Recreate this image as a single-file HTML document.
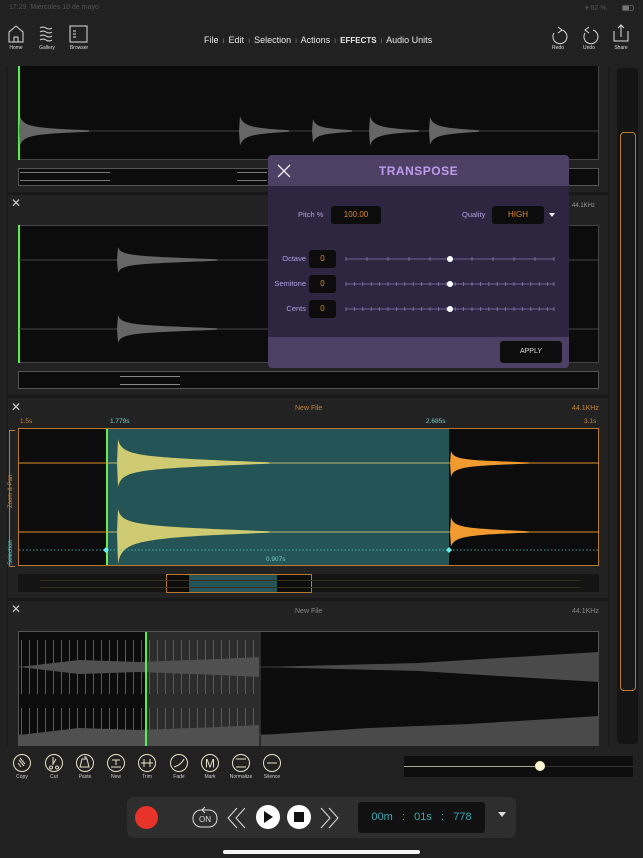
<!DOCTYPE html>
<html><head><meta charset="utf-8">
<style>
*{box-sizing:border-box;margin:0;padding:0}
body{width:643px;height:858px;background:#212121;position:relative;overflow:hidden;font-family:"Liberation Sans",sans-serif;color:#ddd}
.a{position:absolute}
.t{font-size:5px;color:#ddd;text-align:center}
.menu{font-size:9px;color:#e8e8e8}
.wf{background:#0c0c0c}
.lbl{font-size:7.5px;color:#b0a0e0}
.num{background:#0c0c0c;border-radius:3px;color:#e08a2a;font-size:8px;text-align:center}
</style></head><body>
<div class="a" style="left:9px;top:4px;font-size:7px;color:#555">17:29&nbsp; Miércoles 10 de mayo</div>
<div class="a" style="left:585px;top:4px;font-size:7px;color:#555">▾ 62 %</div>
<div class="a" style="left:622px;top:5px;width:12px;height:6px;border:1px solid #555;border-radius:2px"><div style="width:6px;height:4px;background:#777"></div></div>
<svg class="a" style="left:0;top:22px" width="643" height="36" viewBox="0 0 643 36" fill="none" stroke="#ddd" stroke-width="1">
<path d="M9 20V10l7-6 7 6v10zM14 20v-5h4v5"/>
<path d="M40 6q3-2 6 0t6 0M40 10q3-2 6 0t6 0M40 14q3-2 6 0t6 0M40 18q3-2 6 0t6 0"/>
<rect x="70" y="4" width="17" height="16"/><path d="M73 9h3M73 12h3M73 15h3"/>
<path d="M562 8a7 7 0 1 1-8 3M558 5l4 3-4 3"/>
<path d="M585 11a7 7 0 1 0 8-3M589 5l-4 3 4 3"/>
<path d="M614 9v10h14V9M621 15V3M618 6l3-3 3 3"/>
</svg>
<div class="a t" style="left:4px;top:45px;width:24px">Home</div>
<div class="a t" style="left:34px;top:45px;width:26px">Gallery</div>
<div class="a t" style="left:64px;top:45px;width:30px">Browser</div>
<div class="a t" style="left:548px;top:45px;width:20px">Redo</div>
<div class="a t" style="left:579px;top:45px;width:20px">Undo</div>
<div class="a t" style="left:610px;top:45px;width:22px">Share</div>
<div class="a menu" style="left:204px;top:35px;white-space:nowrap">File <span style="color:#888;font-size:6px">&nbsp;I&nbsp;</span> Edit <span style="color:#888;font-size:6px">&nbsp;I&nbsp;</span> Selection <span style="color:#888;font-size:6px">&nbsp;I&nbsp;</span> Actions <span style="color:#888;font-size:6px">&nbsp;I&nbsp;</span> <b style="font-size:8px">EFFECTS</b> <span style="color:#888;font-size:6px">&nbsp;I&nbsp;</span> Audio Units</div>

<div class="a" style="left:7px;top:66px;width:602px;height:680px;background:#191919"></div>
<div class="a" style="left:617px;top:68px;width:21px;height:676px;background:#141414;border-radius:4px"></div>
<div class="a" style="left:620px;top:132px;width:16px;height:559px;border:1px solid #b87a30;border-radius:4px;background:#181818"></div>

<!-- panel 1 -->
<div class="a" style="left:8px;top:66px;width:600px;height:126px;background:#222"></div>
<div class="a wf" style="left:18px;top:66px;width:581px;height:94px;border:1px solid #444;border-top:none"></div>
<div class="a" style="left:18px;top:66px;width:2px;height:94px;background:#5e5"></div>
<svg class="a" style="left:19px;top:66px" width="580" height="94" fill="#666">
<path d="M0 65h580" stroke="#555" stroke-width=".7"/>
<path d="M0 65L1 50C4 61 15 62 70 64.3L70 65.7C15 68 4 69 1 80Z"/>
<path d="M220 65L221 50C224 61 235 62 270 64.3L270 65.7C235 68 224 69 221 80Z"/>
<path d="M293 65L294 53C297 62 305 62 333 64.3L333 65.7C305 68 297 68 294 77Z"/>
<path d="M350 65L351 50C354 61 365 62 400 64.3L400 65.7C365 68 354 69 351 80Z"/>
<path d="M410 65L411 51C414 61 425 62 460 64.3L460 65.7C425 68 414 69 411 79Z"/>
</svg>
<div class="a wf" style="left:18px;top:168px;width:581px;height:18px;border:1px solid #555"></div>
<div class="a" style="left:20px;top:172px;width:90px;height:1px;background:#777"></div>
<div class="a" style="left:20px;top:180px;width:90px;height:1px;background:#777"></div>
<div class="a" style="left:237px;top:172px;width:30px;height:1px;background:#777"></div>
<div class="a" style="left:237px;top:180px;width:30px;height:1px;background:#777"></div>

<!-- panel 2 -->
<div class="a" style="left:8px;top:195px;width:600px;height:200px;background:#222"></div>
<div class="a" style="left:11px;top:196px;font-size:12px;color:#ccc">✕</div>
<div class="a" style="left:572px;top:203px;font-size:6px;color:#999">44.1KHz</div>
<div class="a wf" style="left:18px;top:225px;width:581px;height:138px;border:1px solid #444"></div>
<div class="a" style="left:18px;top:225px;width:2px;height:138px;background:#5e5"></div>
<svg class="a" style="left:19px;top:225px" width="580" height="138" fill="#666">
<path d="M0 35h580M0 104h580" stroke="#555" stroke-width=".7"/>
<path d="M98 35L99 22C102 31 115 31 198 34.3L198 35.7C115 39 102 39 99 48Z"/>
<path d="M98 104L99 90C102 100 115 100 198 103.3L198 104.7C115 108 102 108 99 118Z"/>
</svg>
<div class="a wf" style="left:18px;top:371px;width:581px;height:18px;border:1px solid #555"></div>
<div class="a" style="left:120px;top:376px;width:60px;height:1px;background:#888"></div>
<div class="a" style="left:120px;top:384px;width:60px;height:1px;background:#888"></div>

<!-- panel 3 -->
<div class="a" style="left:8px;top:398px;width:600px;height:200px;background:#222"></div>
<div class="a" style="left:11px;top:400px;font-size:12px;color:#ccc">✕</div>
<div class="a" style="left:295px;top:405px;font-size:7px;color:#c8843a">New File</div>
<div class="a" style="left:572px;top:405px;font-size:7px;color:#c8843a">44.1KHz</div>
<div class="a" style="left:20px;top:418px;font-size:6.5px;color:#c8843a">1.5s</div>
<div class="a" style="left:110px;top:418px;font-size:6.5px;color:#7cc">1.779s</div>
<div class="a" style="left:426px;top:418px;font-size:6.5px;color:#7cc">2.685s</div>
<div class="a" style="left:584px;top:418px;font-size:6.5px;color:#c8843a">3.1s</div>
<div class="a" style="left:9px;top:430px;width:6px;height:137px;border:1px solid #b87a30;border-right:none"></div>
<div class="a" style="left:8px;font-size:6px;color:#c8843a;transform:rotate(-90deg);transform-origin:0 0;white-space:nowrap;top:508px">Zoom &amp; Pan</div>
<div class="a" style="left:8px;top:565px;font-size:6px;color:#5cc;transform:rotate(-90deg);transform-origin:0 0;white-space:nowrap">Selection</div>
<div class="a wf" style="left:18px;top:428px;width:581px;height:138px;border:1px solid #b87a30"></div>
<div class="a" style="left:106px;top:429px;width:343px;height:136px;background:#245456;border-left:2px solid #6e4"></div>
<svg class="a" style="left:19px;top:429px" width="580" height="136">
<path d="M0 34h580M0 103h580" stroke="#e0902a" stroke-width="1"/>
<path d="M88 34h342M88 103h342" stroke="#b8b870" stroke-width="1"/>
<g fill="#cfcb72">
<path d="M98 34L99 10C103 27 115 28 250 33.3L250 34.7C115 40 103 41 99 58Z"/>
<path d="M98 103L99 80C103 96 115 97 250 102.3L250 103.7C115 109 103 112 99 135Z"/>
</g>
<g fill="#f09a30">
<path d="M431 34L432 22C435 31 445 31 510 33.4L510 34.6C445 37 435 38 432 48Z"/>
<path d="M431 103L432 88C435 99 445 99 510 102.4L510 103.6C445 106 435 108 432 118Z"/>
</g>
<path d="M0 121h580" stroke="#5cc" stroke-width=".8" stroke-dasharray="1.5 2"/>
<path d="M84 121l3-3 3 3-3 3zM427 121l3-3 3 3-3 3z" fill="#6ee"/>
</svg>
<div class="a" style="left:266px;top:556px;font-size:6.5px;color:#7cc">0.907s</div>
<div class="a" style="left:18px;top:574px;width:581px;height:18px;background:#141414"></div>
<div class="a" style="left:166px;top:574px;width:146px;height:19px;border:1px solid #b87a30;background:#0c0c0c"></div>
<div class="a" style="left:189px;top:575px;width:88px;height:17px;background:#245456"></div>
<div class="a" style="left:40px;top:580px;width:540px;height:1px;background:#3a2e1a"></div>
<div class="a" style="left:40px;top:587px;width:540px;height:1px;background:#3a2e1a"></div>

<!-- panel 4 -->
<div class="a" style="left:8px;top:601px;width:600px;height:145px;background:#222"></div>
<div class="a" style="left:11px;top:602px;font-size:12px;color:#ccc">✕</div>
<div class="a" style="left:295px;top:608px;font-size:7px;color:#888">New File</div>
<div class="a" style="left:572px;top:608px;font-size:7px;color:#888">44.1KHz</div>
<div class="a wf" style="left:18px;top:631px;width:581px;height:115px;border:1px solid #555;border-bottom:none"></div>
<div class="a" style="left:147px;top:632px;width:114px;height:114px;background:#2c2c2c"></div>
<svg class="a" style="left:19px;top:632px" width="580" height="114">
<defs>
<pattern id="sp" width="8" height="114" patternUnits="userSpaceOnUse"><rect x="2" y="8" width="1" height="54" fill="#5a5a5a"/><rect x="2" y="76" width="1" height="38" fill="#5a5a5a"/></pattern>
</defs>
<path d="M0 35h580M0 103h580" stroke="#444" stroke-width=".7"/>
<rect x="0" y="0" width="242" height="114" fill="url(#sp)"/>
<path d="M0 35L60 28L120 30L200 27L240 25V45L200 43L120 40L60 42L0 35Z" fill="#505050"/>
<path d="M0 103L60 96L120 98L200 95L240 93V114H0Z" fill="#505050"/>
<path d="M242 35L400 31L480 26L580 20V50L480 44L400 39L242 35Z" fill="#4a4a4a"/>
<path d="M242 103L350 96L450 92L580 84V114H242V103Z" fill="#4a4a4a"/>
</svg>
<div class="a" style="left:145px;top:632px;width:2px;height:114px;background:#5e5"></div>

<!-- tools -->
<svg class="a" style="left:0;top:752px" width="300" height="24" fill="none" stroke="#e8e4c8" stroke-width="1">
<circle cx="22" cy="11" r="8.5"/><circle cx="54" cy="11" r="8.5"/><circle cx="85" cy="11" r="8.5"/><circle cx="116" cy="11" r="8.5"/><circle cx="147" cy="11" r="8.5"/><circle cx="179" cy="11" r="8.5"/><circle cx="210" cy="11" r="8.5"/><circle cx="241" cy="11" r="8.5"/><circle cx="272" cy="11" r="8.5"/>
<path d="M19 8l5 6M20 6l5 6M18 11l3 4"/>
<path d="M53 5v8M56 7l-3 5M51 14a1.5 1.5 0 1 0 .1 0M57 14a1.5 1.5 0 1 0 .1 0"/>
<path d="M82 7h5l2 8h-9zM84 5h2v2"/>
<path d="M112 8h8M116 8v5M111 15h10"/>
<path d="M144 7v8M150 7v8M141 11h12"/>
<path d="M174 15q7-2 10-8"/>
<text x="210" y="15.5" text-anchor="middle" font-size="12" fill="#e8e4c8" stroke="none" font-family="Liberation Sans">M</text>
<path d="M236 7h10M236 15h10"/>
<path d="M267 11h10"/>
</svg>
<div class="a" style="left:0;top:774px;width:300px;height:8px;font-size:5px;color:#ccc">
<span class="a" style="left:14px;width:16px;text-align:center">Copy</span>
<span class="a" style="left:46px;width:16px;text-align:center">Cut</span>
<span class="a" style="left:77px;width:16px;text-align:center">Paste</span>
<span class="a" style="left:108px;width:16px;text-align:center">New</span>
<span class="a" style="left:139px;width:16px;text-align:center">Trim</span>
<span class="a" style="left:171px;width:16px;text-align:center">Fade</span>
<span class="a" style="left:202px;width:16px;text-align:center">Mark</span>
<span class="a" style="left:226px;width:30px;text-align:center">Normalize</span>
<span class="a" style="left:262px;width:20px;text-align:center">Silence</span></div>
<div class="a" style="left:404px;top:756px;width:229px;height:21px;background:#0e0e0e"></div>
<div class="a" style="left:404px;top:766px;width:136px;height:1px;background:#a8a890"></div>
<div class="a" style="left:540px;top:766px;width:93px;height:1px;background:#333"></div>
<div class="a" style="left:535px;top:761px;width:10px;height:10px;border-radius:50%;background:#fdf6d0"></div>
<div class="a" style="left:127px;top:797px;width:389px;height:41px;background:#2e2e2e;border-radius:7px"></div>
<div class="a" style="left:135px;top:806px;width:23px;height:23px;border-radius:50%;background:#e8332a"></div>
<svg class="a" style="left:190px;top:802px" width="160" height="32" fill="none" stroke="#ddd" stroke-width="1">
<rect x="3" y="8" width="24" height="17" rx="8"/><path d="M12 8l3-3M12 8l3 3"/>
<text x="15" y="20" text-anchor="middle" font-size="8" fill="#ddd" stroke="none" font-family="Liberation Sans">ON</text>
<path d="M47 6l-9 10 9 10M55 6l-9 10 9 10"/>
<circle cx="78" cy="15" r="12" fill="#fff" stroke="none"/><path d="M74 9v12l9-6z" fill="#111" stroke="none"/>
<circle cx="109" cy="15" r="12" fill="#fff" stroke="none"/><rect x="104" y="10" width="10" height="10" fill="#111" stroke="none"/>
<path d="M131 6l9 10-9 10M139 6l9 10-9 10"/>
</svg>
<div class="a" style="left:358px;top:802px;width:127px;height:31px;background:#111;border-radius:3px;color:#3aa8b4;font-size:11px;line-height:31px;text-align:center;white-space:pre">00m   :   01s   :   778</div>
<div class="a" style="left:498px;top:812px;width:0;height:0;border-left:4px solid transparent;border-right:4px solid transparent;border-top:5px solid #ddd"></div>
<div class="a" style="left:223px;top:850px;width:197px;height:4px;border-radius:2px;background:#f4f4f4"></div>

<!-- transpose dialog -->
<div class="a" style="left:268px;top:155px;width:301px;height:213px;background:#2e2640;border-radius:4px;overflow:hidden">
<div class="a" style="left:0;top:0;width:301px;height:31px;background:#4e4064"></div>
<div class="a" style="left:0;top:182px;width:301px;height:31px;background:#4e4064"></div>
<svg class="a" style="left:9px;top:9px" width="14" height="14" stroke="#eee" stroke-width="1.3"><path d="M1 1l12 12M13 1L1 13"/></svg>
<div class="a" style="left:0;top:9px;width:301px;text-align:center;font-size:12px;font-weight:bold;color:#c09cf0;letter-spacing:.5px">TRANSPOSE</div>
<div class="a lbl" style="left:30px;top:55px">Pitch %</div>
<div class="a num" style="left:63px;top:51px;width:50px;height:18px;line-height:18px">100.00</div>
<div class="a lbl" style="left:194px;top:55px">Quality</div>
<div class="a num" style="left:224px;top:51px;width:52px;height:18px;line-height:18px">HIGH</div>
<div class="a" style="left:281px;top:58px;border-left:3px solid transparent;border-right:3px solid transparent;border-top:4px solid #eee"></div>
<div class="a lbl" style="left:8px;top:99px;width:30px;text-align:right">Octave</div>
<div class="a lbl" style="left:0px;top:124px;width:38px;text-align:right">Semitone</div>
<div class="a lbl" style="left:8px;top:149px;width:30px;text-align:right">Cents</div>
<div class="a num" style="left:41px;top:95px;width:27px;height:18px;line-height:18px">0</div>
<div class="a num" style="left:41px;top:120px;width:27px;height:18px;line-height:18px">0</div>
<div class="a num" style="left:41px;top:145px;width:27px;height:18px;line-height:18px">0</div>
<svg class="a" style="left:76px;top:95px" width="214" height="70" stroke="#8a78b0" stroke-width=".8">
<path d="M2 9h208M2 34h208M2 59h208"/>
<path d="M2 7v4M23 7v4M44 7v4M65 7v4M86 7v4M107 7v4M128 7v4M149 7v4M170 7v4M191 7v4M210 7v4"/>
<path d="M2 32v4M10.4 32v4M18.8 32v4M27.2 32v4M35.6 32v4M44 32v4M52.4 32v4M60.8 32v4M69.2 32v4M77.6 32v4M86 32v4M94.4 32v4M102.8 32v4M111.2 32v4M119.6 32v4M128 32v4M136.4 32v4M144.8 32v4M153.2 32v4M161.6 32v4M170 32v4M178.4 32v4M186.8 32v4M195.2 32v4M203.6 32v4M210 32v4"/>
<path d="M2 57v4M10.4 57v4M18.8 57v4M27.2 57v4M35.6 57v4M44 57v4M52.4 57v4M60.8 57v4M69.2 57v4M77.6 57v4M86 57v4M94.4 57v4M102.8 57v4M111.2 57v4M119.6 57v4M128 57v4M136.4 57v4M144.8 57v4M153.2 57v4M161.6 57v4M170 57v4M178.4 57v4M186.8 57v4M195.2 57v4M203.6 57v4M210 57v4"/>
<g fill="#fff" stroke="none"><circle cx="106" cy="9" r="3"/><circle cx="106" cy="34" r="3"/><circle cx="106" cy="59" r="3"/></g>
</svg>
<div class="a" style="left:232px;top:186px;width:62px;height:22px;background:#0e0e0e;border-radius:3px;color:#ddd;font-size:7px;line-height:22px;text-align:center">APPLY</div>
</div>
</body></html>
